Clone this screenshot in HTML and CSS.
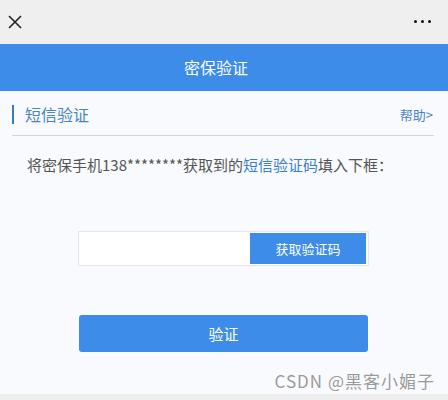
FILE: index.html
```html
<!DOCTYPE html>
<html lang="zh-CN">
<head>
    <meta charset="UTF-8">
    <meta name="viewport" content="width=device-width, initial-scale=1.0">
    <title>密保验证</title>
    <link rel="stylesheet" href="styles.css">
</head>
<body>
    <div class="topbar">
        <svg class="close" width="14" height="14" viewBox="0 0 14 14">
            <path d="M1 1 L13 13 M13 1 L1 13" stroke="#222" stroke-width="1.6" fill="none"/>
        </svg>
        <div class="dots"><span></span><span></span><span></span></div>
    </div>

    <div class="header">密保验证</div>

    <div class="page">
        <div class="section-head">
            <h2>短信验证</h2>
            <a class="help">帮助&gt;</a>
        </div>

        <p class="tip">将密保手机138********获取到的<span class="link">短信验证码</span>填入下框：</p>

        <div class="code-row">
            <input type="text" class="code-input">
            <button class="get-code">获取验证码</button>
        </div>

        <button class="submit">验证</button>

        <div class="mark">CSDN @黑客小媚子</div>
    </div>
    <div class="bottom"></div>
</body>
</html>
```

FILE: styles.css
```css
body {
    margin: 0;
    font-family: "Noto Sans CJK SC", "Noto Sans", sans-serif;
    background-color: #f8fafd;
    height: 400px;
    overflow: hidden;
}
.topbar {
    height: 44px;
    background-color: #efefef;
    display: flex;
    align-items: center;
    justify-content: space-between;
    padding: 0 17px 0 8px;
}
.close {
    display: block;
    margin-top: -1px;
}
.dots {
    display: flex;
    gap: 4px;
    margin-top: -2px;
}
.dots span {
    width: 3px;
    height: 3px;
    border-radius: 50%;
    background-color: #111;
}
.header {
    height: 47px;
    line-height: 47px;
    padding-right: 16px;
    background-color: #3d8ce9;
    color: #fff;
    text-align: center;
    font-size: 16px;
}
.page {
    height: 303px;
    padding: 0 14px 0 12px;
    position: relative;
}
.section-head {
    display: flex;
    align-items: center;
    justify-content: space-between;
    height: 41px;
    padding-top: 3px;
    border-bottom: 1px solid #cfd6e0;
}
.section-head h2 {
    margin: 0;
    padding-left: 11px;
    border-left: 2px solid #3e78bd;
    font-size: 16px;
    font-weight: normal;
    line-height: 19px;
    color: #4a84c8;
}
.help {
    font-size: 13px;
    color: #4a84c8;
    margin-right: 1px;
}
.tip {
    margin: 18px 0 0 15px;
    font-size: 15px;
    color: #555;
}
.link {
    color: #3a7fcf;
}
.code-row {
    display: flex;
    width: 287px;
    height: 31px;
    margin: 56px 0 0 66px;
    padding: 1px 2px 1px 0;
    background-color: #fff;
    border: 1px solid #e3e6ea;
}
.code-input {
    flex: 1;
    min-width: 0;
    border: none;
    outline: none;
    padding: 0 8px;
    background: transparent;
}
.get-code {
    width: 116px;
    flex: none;
    border: none;
    background-color: #3d8ce9;
    color: #fff;
    font-family: inherit;
    font-size: 13px;
    padding: 0;
}
.submit {
    display: block;
    width: 289px;
    height: 37px;
    margin: 49px 0 0 67px;
    border: none;
    border-radius: 3px;
    background-color: #3d8ce9;
    color: #fff;
    font-family: inherit;
    font-size: 15px;
}
.mark {
    position: absolute;
    right: 13px;
    bottom: 1px;
    font-size: 17px;
    letter-spacing: 1px;
    color: #9a9a9a;
    text-shadow: 0 0 2px #fff;
}
.bottom {
    height: 6px;
    background-color: #eeeeee;
}
```
